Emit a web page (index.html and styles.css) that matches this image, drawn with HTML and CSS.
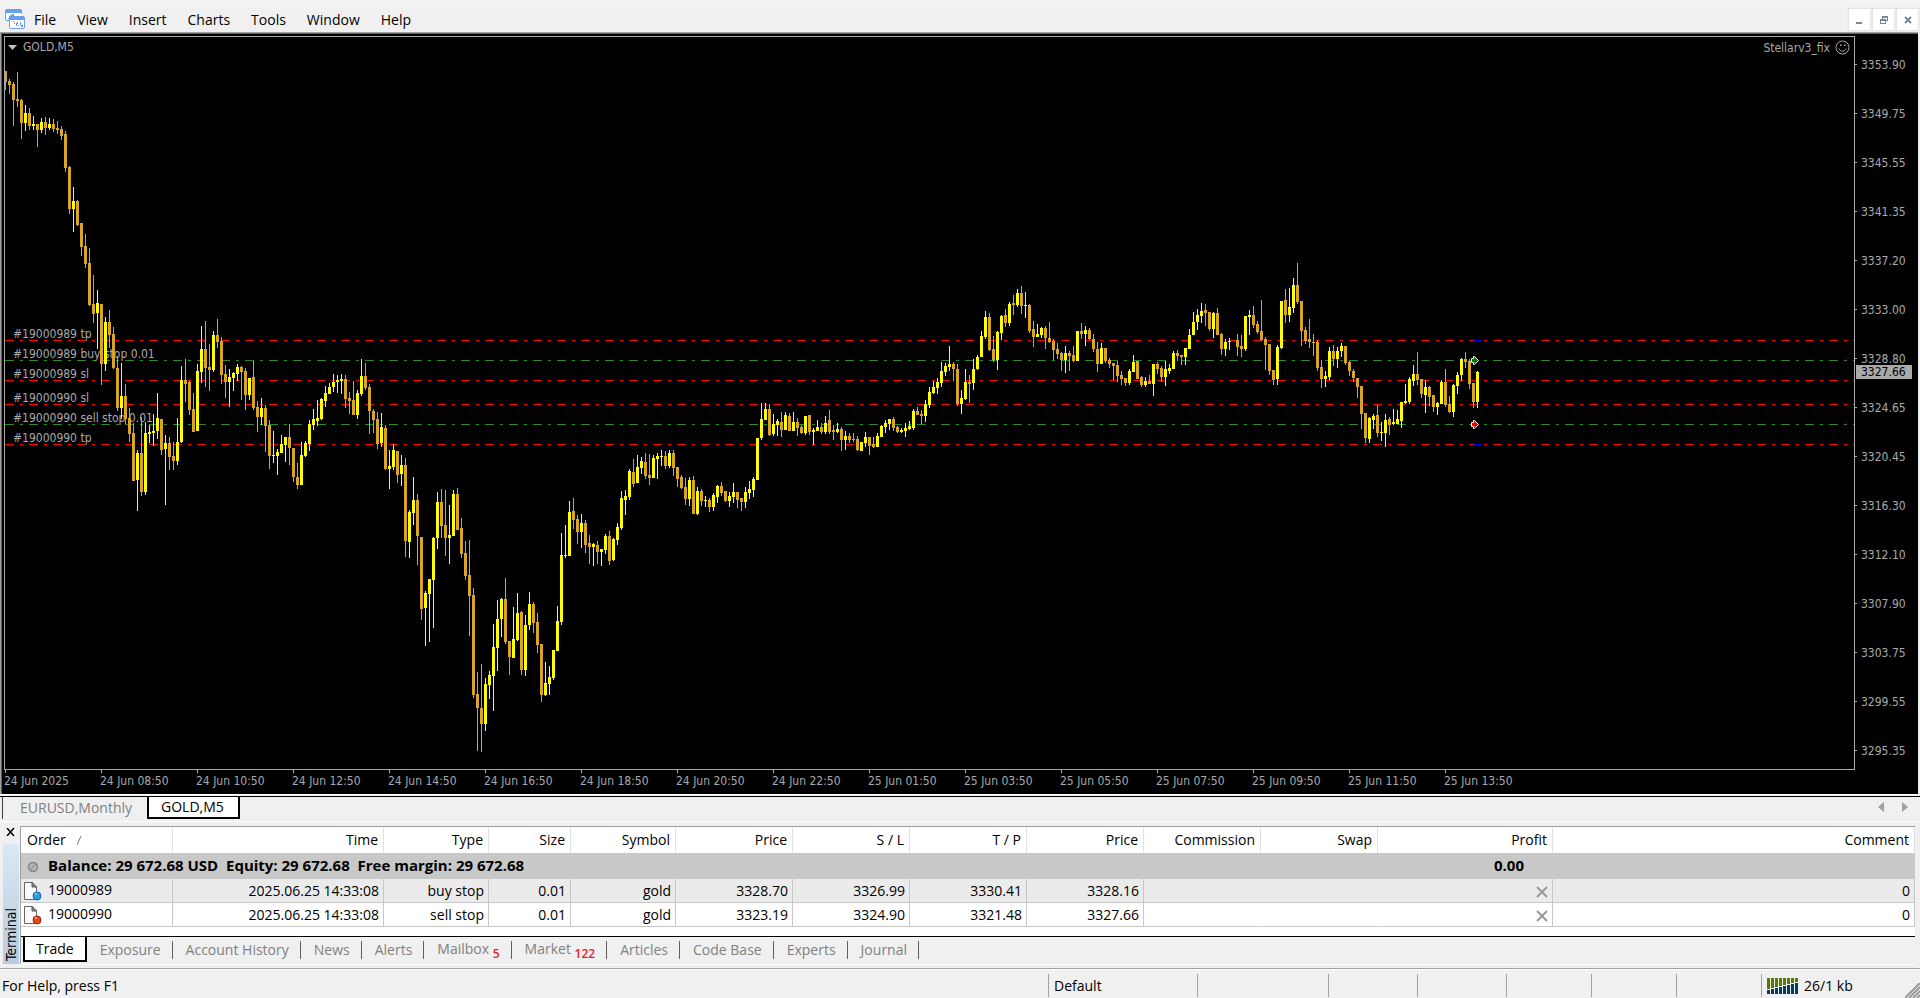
FILE: index.html
```html
<!DOCTYPE html>
<html lang="en">
<head>
    <meta charset="utf-8">
    <title>GOLD,M5</title>
    <link rel="stylesheet" href="styles.css">
</head>
<body>
<header class="menubar">
    <svg class="app-icon" width="21" height="21" viewBox="0 0 21 21" shape-rendering="crispEdges">
        <path d="M0 1h17v11H0z" fill="#fff"/>
        <path d="M1 0h15v1h1v4h-1V4H1v7h3v1H1v-1H0V1h1z" fill="#6a9ff0"/>
        <path d="M3 9h1V7h1V6h1v2h1V5h1v2h2" fill="none" stroke="#6a9ff0"/>
        <path d="M4 8h16v11H4z" fill="#fff"/>
        <path d="M5 7h14v1h1v11h-1v1H5v-1H4V8h1zM5 11v8h14v-8z" fill="#6a9ff0" fill-rule="evenodd"/>
        <path d="M8 12h1v2h1v3h1v-3h1v-1h1v3h1v1h-1v-2h-1v-1v3h-2v-2H9v-2H8zM15 13h1v3h-1zM16 16h2v2h-2z" fill="#5a8fe8"/>
    </svg>
    <nav class="menu">
        <button>File</button>
        <button>View</button>
        <button>Insert</button>
        <button>Charts</button>
        <button>Tools</button>
        <button>Window</button>
        <button>Help</button>
    </nav>
    <div class="win-buttons">
        <button aria-label="Minimize"><svg width="21" height="21" shape-rendering="crispEdges"><path d="M7 13h6v2H7z" fill="#7a8794"/></svg></button>
        <button aria-label="Restore"><svg width="21" height="21" shape-rendering="crispEdges"><path d="M9 7h6v5h-2v-1h1V9h-4v1H9zM7 10h6v5H7zM8 12v2h4v-2z" fill="#7a8794" fill-rule="evenodd"/></svg></button>
        <button aria-label="Close"><svg width="21" height="21"><path d="M8 8l6 6M14 8l-6 6" stroke="#7a8794" stroke-width="2"/></svg></button>
    </div>
</header>

<main class="chart">
    <div class="chart-main">
        <div class="plot">
            <svg class="candles" width="100%" height="100%">
                <g class="labels">
                    <text x="8" y="301">#19000989 tp</text>
                    <text x="8" y="321">#19000989 buy stop 0.01</text>
                    <text x="8" y="341">#19000989 sl</text>
                    <text x="8" y="365">#19000990 sl</text>
                    <text x="8" y="385">#19000990 sell stop 0.01</text>
                    <text x="8" y="405">#19000990 tp</text>
                </g>
                <g class="levels" shape-rendering="crispEdges">
                    <line class="stop" x1="0" y1="303.5" x2="100%" y2="303.5"/>
                    <line class="open" x1="0" y1="323.5" x2="100%" y2="323.5"/>
                    <line class="stop" x1="0" y1="343.5" x2="100%" y2="343.5"/>
                    <line class="stop" x1="0" y1="367.5" x2="100%" y2="367.5"/>
                    <line class="open" x1="0" y1="387.5" x2="100%" y2="387.5"/>
                    <line class="stop" x1="0" y1="407.5" x2="100%" y2="407.5"/>
                </g>
                <g id="candles" shape-rendering="crispEdges"></g>
                <g shape-rendering="crispEdges" fill="#00f">
                    <rect x="1469" y="303" width="7" height="1"/>
                    <rect x="1469" y="407" width="7" height="1"/>
                </g>
                <g stroke="#fff">
                    <path d="M1466.500 321.500h2v-2h1l4 4-4 4h-1v-2h-2z" fill="green"/>
                    <path d="M1466.500 385.500h2v-2h1l4 4-4 4h-1v-2h-2z" fill="red"/>
                </g>
            </svg>
            <div class="plot-title">
                <svg width="9" height="5"><path d="M0 0h9L4.500 5z" fill="#c0c0c0"/></svg>
                <span>GOLD,M5</span>
            </div>
            <div class="expert">
                <span>Stellarv3_fix</span>
                <svg width="15" height="15" viewBox="0 0 15 15" fill="none" stroke="#a9a9a9">
                    <circle cx="7.500" cy="7.500" r="6.500"/>
                    <path d="M4 8.500c1 3.500 6 3.500 7 0"/>
                    <path d="M5 4.500h1.500v1.500H5zM9 4.500h1.500v1.500H9z" fill="#a9a9a9" stroke="none"/>
                </svg>
            </div>
        </div>
        <div class="price-axis">
            <span>3353.90</span>
            <span>3349.75</span>
            <span>3345.55</span>
            <span>3341.35</span>
            <span>3337.20</span>
            <span>3333.00</span>
            <span>3328.80</span>
            <span>3324.65</span>
            <span>3320.45</span>
            <span>3316.30</span>
            <span>3312.10</span>
            <span>3307.90</span>
            <span>3303.75</span>
            <span>3299.55</span>
            <span>3295.35</span>
            <b class="price-tag">3327.66</b>
        </div>
    </div>
    <div class="time-axis">
        <span>24 Jun 2025</span>
        <span>24 Jun 08:50</span>
        <span>24 Jun 10:50</span>
        <span>24 Jun 12:50</span>
        <span>24 Jun 14:50</span>
        <span>24 Jun 16:50</span>
        <span>24 Jun 18:50</span>
        <span>24 Jun 20:50</span>
        <span>24 Jun 22:50</span>
        <span>25 Jun 01:50</span>
        <span>25 Jun 03:50</span>
        <span>25 Jun 05:50</span>
        <span>25 Jun 07:50</span>
        <span>25 Jun 09:50</span>
        <span>25 Jun 11:50</span>
        <span>25 Jun 13:50</span>
    </div>
</main>

<div class="chart-tabs">
    <button>EURUSD,Monthly</button>
    <button class="active">GOLD,M5</button>
    <div class="tab-arrows">
        <button aria-label="Previous"><svg width="6" height="10"><path d="M6 0v10L0 5z" fill="#a0a0a0"/></svg></button>
        <button aria-label="Next"><svg width="6" height="10"><path d="M0 0v10l6-5z" fill="#a0a0a0"/></svg></button>
    </div>
</div>

<section class="terminal">
    <div class="terminal-side">
        <button aria-label="Close terminal"><svg width="9" height="8"><path d="M1 0l7 8M8 0L1 8" stroke="#000" stroke-width="1.500"/></svg></button>
        <div class="terminal-name"><span>Terminal</span></div>
    </div>
    <div class="terminal-body">
        <table class="orders">
            <colgroup>
                <col class="c-order"><col class="c-time"><col class="c-type"><col class="c-size"><col class="c-symbol">
                <col class="c-num"><col class="c-num"><col class="c-num"><col class="c-num"><col class="c-num"><col class="c-num">
                <col class="c-profit"><col>
            </colgroup>
            <thead>
                <tr>
                    <th class="first">Order <svg width="5" height="9"><path d="M0 9L4 0" stroke="#777"/></svg></th>
                    <th>Time</th>
                    <th>Type</th>
                    <th>Size</th>
                    <th>Symbol</th>
                    <th>Price</th>
                    <th>S / L</th>
                    <th>T / P</th>
                    <th>Price</th>
                    <th>Commission</th>
                    <th>Swap</th>
                    <th>Profit</th>
                    <th>Comment</th>
                </tr>
            </thead>
            <tbody>
                <tr class="balance">
                    <td class="first" colspan="11">
                        <svg width="28" height="12" fill="none" stroke="#858585"><circle cx="13" cy="6" r="4.500" fill="#b4b4b4" stroke-width="1.500"/><path d="M10 9l6-6"/></svg><span>Balance: 29 672.68 USD&nbsp; Equity: 29 672.68&nbsp; Free margin: 29 672.68</span>
                    </td>
                    <td class="total">0.00</td>
                    <td></td>
                </tr>
                <tr class="odd">
                    <td class="first">
                        <svg width="28" height="20"><path d="M4.500 1.500h8l4 4v13h-12z" fill="#fafafa" stroke="#666"/><path d="M12 1v5h5" fill="#888" stroke="#555"/><circle cx="17" cy="15" r="4" fill="#2a9be4" stroke="#1668a8"/><circle cx="16" cy="13" r="1" fill="#a8dcff"/></svg><span>19000989</span>
                    </td>
                    <td>2025.06.25 14:33:08</td>
                    <td>buy stop</td>
                    <td>0.01</td>
                    <td>gold</td>
                    <td>3328.70</td>
                    <td>3326.99</td>
                    <td>3330.41</td>
                    <td>3328.16</td>
                    <td class="open-cell"></td>
                    <td class="open-cell"></td>
                    <td><button aria-label="Delete order"><svg width="12" height="12"><path d="M1 1l10 10M11 1L1 11" stroke="#999" stroke-width="2"/></svg></button></td>
                    <td>0</td>
                </tr>
                <tr>
                    <td class="first">
                        <svg width="28" height="20"><path d="M4.500 1.500h8l4 4v13h-12z" fill="#fafafa" stroke="#666"/><path d="M12 1v5h5" fill="#888" stroke="#555"/><circle cx="17" cy="15" r="4" fill="#e0481c" stroke="#9c2c0c"/><circle cx="16" cy="13" r="1" fill="#ffb89c"/></svg><span>19000990</span>
                    </td>
                    <td>2025.06.25 14:33:08</td>
                    <td>sell stop</td>
                    <td>0.01</td>
                    <td>gold</td>
                    <td>3323.19</td>
                    <td>3324.90</td>
                    <td>3321.48</td>
                    <td>3327.66</td>
                    <td class="open-cell"></td>
                    <td class="open-cell"></td>
                    <td><button aria-label="Delete order"><svg width="12" height="12"><path d="M1 1l10 10M11 1L1 11" stroke="#999" stroke-width="2"/></svg></button></td>
                    <td>0</td>
                </tr>
            </tbody>
        </table>
        <div class="terminal-tabs">
            <button class="active">Trade</button>
            <button>Exposure</button>
            <button>Account History</button>
            <button>News</button>
            <button>Alerts</button>
            <button>Mailbox <sub>5</sub></button>
            <button>Market <sub>122</sub></button>
            <button>Articles</button>
            <button>Code Base</button>
            <button>Experts</button>
            <button>Journal</button>
        </div>
    </div>
</section>

<footer class="statusbar">
    <span class="help">For Help, press F1</span>
    <span class="pane profile">Default</span>
    <span class="pane pane-date"></span>
    <span class="pane pane-price"></span>
    <span class="pane pane-price"></span>
    <span class="pane pane-low"></span>
    <span class="pane pane-low"></span>
    <span class="pane pane-low"></span>
    <span class="pane traffic">
        <svg id="signal" width="32" height="16" shape-rendering="crispEdges"></svg>
        26/1 kb
    </span>
    <svg class="grip" width="15" height="15"><path d="M0 15L15 0M4 15L15 4M8 15l7-7M12 15l3-3" stroke="#999" stroke-width="2"/></svg>
</footer>
<script src="chart.js"></script>
</body>
</html>
```

FILE: styles.css
```css
*{box-sizing:border-box;margin:0;padding:0;}
body{display:flex;flex-direction:column;height:100vh;background:#f0f0f0;color:#000;font:14px/20px "Open Sans","Noto Sans",sans-serif;overflow:hidden;}
button{border:0;background:none;font:inherit;color:inherit;}
svg{display:block;}

/* menu */
.menubar{display:flex;align-items:center;height:32px;padding:7px 2px 0 5px;background:linear-gradient(#f4f4f4 7px,#f0f0f0 7px);}
.menu{display:flex;flex:1;gap:21px;padding-left:8px;}
.win-buttons{display:flex;gap:3px;}
.win-buttons button{width:21px;height:21px;background:#fff;box-shadow:0 0 1px 1px #e4e4e4;}

/* chart */
.chart{display:flex;flex:1;flex-direction:column;min-height:0;margin-right:2px;padding:2px 0 0 2px;background:#000;border:solid #a0a0a0;border-width:1px 0 0 1px;box-shadow:inset 1px 1px #606060;color:#a9a9a9;font:12px/14px "DejaVu Sans Condensed","Noto Sans",sans-serif;}
.chart-main{display:flex;flex:1;min-height:0;padding:1px 0 0 1px;}
.plot{position:relative;flex:1;border:1px solid #a9a9a9;}
.candles{position:absolute;inset:0;}
.labels text{fill:#a9a9a9;}
.levels line{stroke-dasharray:9 6 3 6;}
.stop{stroke:#f00;}
.open{stroke:#228b22;}
.up{fill:#ff0;}
.down{fill:#daa520;}
.plot-title,.expert{position:absolute;display:flex;align-items:center;}
.plot-title{left:3px;top:3px;gap:6px;}
.expert{right:4px;top:3px;gap:5px;}
.price-axis{position:relative;display:flex;flex-direction:column;width:63px;padding-top:4px;}
.price-axis span{display:flex;flex:none;align-items:center;height:49px;}
.price-axis span::before{content:"";width:2px;height:1px;margin-right:4px;background:#a9a9a9;}
.price-tag{position:absolute;left:1px;top:329px;width:56px;padding-left:5px;background:#a9a9a9;color:#000;font-weight:400;}
.time-axis{display:flex;height:24px;padding-left:1px;}
.time-axis span{position:relative;width:96px;padding-top:4px;white-space:nowrap;}
.time-axis span::before{content:"";position:absolute;left:1px;top:0;width:1px;height:3px;background:#a9a9a9;}

/* chart tabs */
.chart-tabs{display:flex;height:28px;padding:0 12px 2px 2px;border-top:1px solid #fff;border-bottom:1px solid #fff;box-shadow:inset 0 1px #f0f0f0,inset 0 2px #000;}
.chart-tabs button{margin-top:2px;padding:0 12px;color:#808080;text-align:left;}
.chart-tabs button:first-child{width:145px;padding-left:17px;border-left:1px solid #404040;}
.chart-tabs .active{width:93px;border:solid #000;border-width:0 2px 2px;background:#fff;color:#000;}
.tab-arrows{display:flex;align-items:center;gap:18px;margin-left:auto;}
.chart-tabs .tab-arrows button{width:auto;margin:0;padding:0;border:0;}

/* terminal */
.terminal{display:flex;height:147px;padding:4px 5px 4px 3px;border-bottom:1px solid #a0a0a0;}
.terminal-side{display:flex;flex-direction:column;width:16px;margin-right:1px;}
.terminal-side button{height:12px;margin-bottom:6px;padding:0 3px;}
.terminal-name{display:flex;flex:1;align-items:center;writing-mode:vertical-rl;transform:rotate(180deg);padding-top:3px;background:linear-gradient(#bccbdc,#d9e8f5);font:14px/16px "DejaVu Sans Condensed",sans-serif;}
.terminal-body{display:flex;flex:1;flex-direction:column;min-width:0;border:solid #a0a0a0;border-width:1px 0 0 1px;background:#fff;box-shadow:0 1px #fff;}
.orders{width:100%;table-layout:fixed;border-collapse:separate;border-spacing:0;}
.c-order{width:152px;}
.c-time{width:211px;}
.c-type{width:105px;}
.c-size{width:82px;}
.c-symbol{width:105px;}
.c-num{width:117px;}
.c-profit{width:175px;}
.orders th{height:26px;padding-right:5px;border-right:1px solid #e0e0e0;font-weight:400;text-align:right;}
.orders td{height:24px;padding-right:4px;border-right:1px solid #c8c8c8;border-bottom:1px solid #c8c8c8;text-align:right;white-space:nowrap;}
.orders .first{text-align:left;}
.orders th.first{padding-left:6px;}
.orders th svg{display:inline-block;margin-left:8px;}
.orders td svg{display:inline-block;vertical-align:middle;}
.orders td.first svg{margin-left:-1px;}
.orders tr.balance td{height:26px;padding-bottom:2px;border:0;background:#c8c8c8;font-size:15px;font-weight:700;}
.orders tr.balance .total{padding-right:29px;}
.orders .odd td{background:#ebebeb;}
.orders td.open-cell{border-right-color:transparent;}
.orders td button{display:inline-block;vertical-align:top;}
.terminal-tabs{display:flex;height:28px;margin-top:auto;padding-left:2px;border-top:1px solid #000;background:#f0f0f0;}
.terminal-tabs button{position:relative;height:25px;padding:0 12px 0 13px;color:#808080;white-space:nowrap;}
.terminal-tabs button:not(.active)::after{content:"";position:absolute;right:0;top:4px;width:1px;height:18px;background:#606060;}
.terminal-tabs .active{padding:0 11px;border:solid #000;border-width:0 2px 2px;background:#fff;color:#000;}
.terminal-tabs sub{color:#e8202c;font-size:12px;font-weight:600;line-height:12px;}

/* status bar */
.statusbar{position:relative;display:flex;height:29px;padding:4px 0 1px 2px;border-top:1px solid #fff;}
.statusbar span{line-height:24px;}
.help{flex:1;}
.pane{width:89px;padding-left:5px;border-left:1px solid #a0a0a0;}
.profile{width:149px;}
.pane-date{width:131px;}
.pane-low{width:85px;}
.traffic{display:flex;align-items:center;gap:5px;width:159px;}
.grip{position:absolute;right:0;bottom:0;}
```

FILE: chart.js
```js
// one bar each: direction, then high, body top, body bottom, low (y in the window)
var BARS = [
    "d71,71,82,90 d79,81,85,94 d82,84,100,126 d72,99,101,107 d99,100,123,139 u105,113,123,131 d108,113,126,130 u116,124,126,130 d124,124,130,147 u118,122,130,133",
    "d117,122,128,135 u118,124,128,130 d119,124,129,132 d121,128,130,134 d126,129,136,140 d131,134,168,172 d166,167,209,214 u187,201,209,232 d200,201,225,226 d223,223,247,256",
    "d234,246,264,268 d248,263,305,306 d275,304,314,323 u290,303,313,349 d304,304,364,385 u317,322,364,371 d310,322,335,348 d327,334,368,369 d356,368,408,411 u363,396,408,419",
    "d384,396,419,424 d408,418,434,442 d423,433,481,481 u450,453,480,511 d417,453,492,496 u422,433,492,495 u425,432,434,443 u414,431,433,446 u393,418,431,439 d419,419,450,455",
    "u435,443,449,505 d437,443,457,470 d442,456,461,470 u418,442,461,465 u366,380,442,443 d359,380,384,402 d381,382,410,415 d393,409,432,432 u364,371,431,431 u326,349,372,383",
    "d321,349,368,387 d344,367,370,391 u331,335,370,372 d319,335,342,348 d337,341,375,384 d365,374,382,398 u369,377,382,407 u372,373,378,391 u364,367,374,381 d366,367,372,400",
    "d368,371,395,410 u378,378,395,400 d361,377,408,410 d401,407,417,432 u398,408,417,425 d405,408,426,452 d420,425,456,469 u431,455,456,463 u449,452,456,475 u435,444,453,453",
    "u437,437,445,462 d424,437,448,465 d448,448,477,482 d463,477,485,489 u442,455,485,485 u441,443,456,457 u420,424,444,451 u409,419,425,430 u400,418,421,426 u398,399,419,420",
    "u386,393,401,407 u383,387,394,394 u374,382,387,392 u375,380,382,393 u374,379,381,394 d375,379,399,408 d392,398,401,414 d381,400,415,415 u390,393,415,419 u359,376,394,396",
    "d363,376,388,390 d384,387,411,434 d409,411,420,433 d412,419,444,449 u413,427,443,447 d425,428,469,470 u450,466,469,489 u444,450,467,470 d451,451,475,483 u455,465,474,486",
    "d458,465,541,557 u510,512,542,558 u477,500,513,525 d494,500,536,565 d537,537,609,620 u591,593,608,646 u579,579,594,642 u537,538,580,628 u492,502,538,549 d489,502,526,538",
    "d490,525,538,556 u505,535,538,564 u490,494,536,536 d488,494,530,530 d518,528,554,558 d541,553,576,580 d540,575,596,636 d588,595,695,698 d672,694,708,751 d664,708,724,752",
    "u678,684,724,731 u671,675,685,699 u624,647,676,711 u600,619,648,671 u598,599,619,637 d578,599,642,644 d641,641,657,675 u607,639,658,658 u593,613,640,641 d611,612,670,675",
    "u615,625,670,676 u592,604,625,630 d602,604,623,633 d613,622,645,653 d644,644,695,702 u662,683,695,696 u666,677,684,695 u650,650,678,680 u606,621,651,651 u533,555,622,625",
    "u525,555,556,558 u501,512,556,556 d498,511,520,529 d515,519,532,544 u514,523,532,548 d520,523,545,553 d535,543,547,564 u543,544,547,566 d541,545,552,564 u549,549,552,566",
    "u534,536,550,554 d531,536,561,565 u538,539,560,561 u523,527,540,545 u491,498,528,530 u490,496,500,515 u469,471,497,500 d459,472,484,487 u455,467,483,483 u457,461,468,474",
    "d453,462,476,479 d454,475,478,485 u455,458,478,478 u453,456,459,479 u450,456,457,466 d451,456,466,469 u450,453,466,468 d450,453,468,476 d467,467,479,487 d475,477,488,489",
    "d478,487,499,505 u477,480,499,506 d476,480,514,514 u487,491,514,515 d489,491,501,506 u496,500,501,507 d498,500,507,512 u493,495,507,511 u485,486,497,503 d482,486,493,496",
    "d491,491,501,502 u492,496,501,507 u483,492,497,503 d492,492,500,508 d498,498,502,511 u487,492,502,508 u481,489,493,499 u477,479,490,497 u438,438,480,480 u403,419,438,440",
    "u403,409,420,420 d404,409,435,436 u414,424,434,436 u419,421,425,436 d412,422,430,437 u412,415,430,430 d413,416,431,431 u412,422,431,431 d418,422,428,436 d425,427,433,434",
    "u416,416,433,435 d415,415,432,435 u428,430,432,445 u420,427,431,431 d423,427,432,434 u416,423,432,434 d410,420,432,434 d425,430,432,440 u423,429,432,433 d427,429,440,451",
    "u431,436,440,450 d433,436,440,443 d433,439,440,442 d436,439,450,451 u442,442,451,451 u432,437,443,447 d437,437,446,455 d437,444,447,448 u433,436,447,447 u425,426,437,437",
    "u420,423,427,433 u419,419,424,430 d417,419,428,431 d426,427,432,433 u428,430,432,433 u423,428,431,437 u421,426,429,430 u409,411,428,430 d407,411,415,415 d410,414,416,424",
    "u400,404,416,422 u387,392,405,408 u381,387,393,394 u378,382,388,394 u362,371,383,387 u363,366,372,376 u346,364,367,371 d362,364,369,381 d364,369,404,406 u390,398,404,414",
    "u369,382,399,400 d375,382,384,403 u359,369,383,390 u355,357,369,370 u331,336,357,357 u311,317,337,339 d313,317,350,351 d336,349,360,362 u331,332,360,370 u315,316,333,340",
    "d309,315,323,327 u302,304,323,326 d295,303,305,315 u289,293,305,307 d286,293,306,314 u292,305,306,318 d304,305,331,333 d321,329,337,347 u324,334,337,337 u327,328,335,338",
    "d326,328,338,349 d322,338,342,343 d339,341,350,360 d343,349,354,359 d352,353,360,371 u346,353,360,373 d351,353,356,371 d346,355,361,362 u331,331,361,361 d323,331,334,339",
    "u326,330,334,346 d328,330,339,340 d334,339,349,352 d342,349,364,372 u343,348,364,364 d348,348,361,363 d358,360,364,368 d363,363,366,380 d361,365,376,382 d371,375,379,385",
    "d378,378,383,386 u369,371,383,385 u355,362,372,372 d361,361,379,379 d376,377,385,387 u377,381,385,387 d375,381,384,384 u364,364,384,396 d362,364,369,374 d366,368,377,382",
    "u361,369,377,386 u364,368,371,374 u351,353,369,369 d350,353,356,361 d355,355,357,365 u348,348,357,365 u329,335,349,349 u312,322,335,335 u309,315,322,330 u303,311,316,323",
    "d304,310,313,326 d312,312,329,331 u312,313,329,338 d308,313,335,335 d333,334,349,355 u339,342,349,356 u338,341,342,350 - d334,340,347,356 d335,346,349,357",
    "u316,316,349,351 u310,315,317,335 d306,315,325,328 d321,324,332,334 d300,331,340,341 d337,339,345,370 d344,344,371,375 d370,370,380,385 u345,347,379,385 u301,301,348,349",
    "d289,300,315,323 u288,307,315,322 u278,285,308,313 d263,285,302,304 d301,301,331,346 d327,330,341,344 d319,339,342,348 d334,342,343,356 d340,342,368,371 d360,367,379,388",
    "u371,376,379,387 u347,351,377,380 d345,351,359,366 u347,351,359,368 u343,346,351,357 d346,346,363,365 d361,362,371,376 d369,371,378,382 d378,378,387,398 d386,386,414,429",
    "d413,413,438,443 u417,418,439,443 u414,416,420,429 d405,415,433,437 u422,432,433,441 u414,420,433,447 d417,419,425,435 u409,422,424,425 u410,419,424,424 u402,402,421,428",
    "u384,401,403,404 u377,379,402,404 u365,374,381,386 d352,374,380,385 d379,379,394,398 u380,387,395,413 d386,387,397,406 d395,395,407,412 u402,403,407,415 u380,382,404,404",
    "d369,382,405,407 d396,404,412,413 u384,385,412,417 u372,375,386,394 u358,359,375,381 d352,359,362,368 d359,361,384,389 d383,383,402,408 u371,372,402,408"
].join(" ").split(" ");

var STEP = 4;
var TOP = 37;

function rect(x, y, w, h, attrs) {
    return '<rect x="' + x + '" y="' + y + '" width="' + w + '" height="' + h + '" ' + attrs + '/>';
}

function drawCandles() {
    var out = "";
    BARS.forEach(function (bar, i) {
        if (bar == "-") return;
        var p = bar.slice(1).split(",").map(Number);
        var cls = bar.charAt(0) == "u" ? 'class="up"' : 'class="down"';
        out += rect(i * STEP, p[0] - TOP, 1, p[3] - p[0], cls);
        out += rect(i * STEP - 1, p[1] - TOP, 3, p[2] - p[1], cls);
    });
    document.getElementById("candles").innerHTML = out;
}

// connection meter
function drawSignal() {
    var out = "";
    for (var i = 0; i < 8; i++) {
        out += rect(i * 4, 0, 3, 11 - i, 'fill="#5a7800"');
        out += rect(i * 4, 12 - i, 3, 4 + i, 'fill="#00405e"');
    }
    document.getElementById("signal").innerHTML = out;
}

drawCandles();
drawSignal();
```
